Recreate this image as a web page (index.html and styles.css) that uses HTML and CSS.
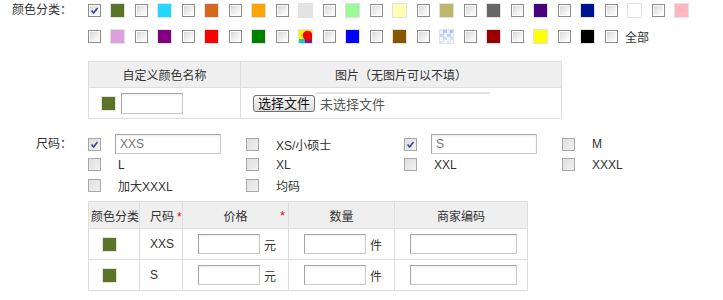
FILE: index.html
```html
<!DOCTYPE html>
<html lang="zh-CN">
<head>
    <meta charset="UTF-8">
    <title>颜色与尺码</title>
    <link rel="stylesheet" href="styles.css">
</head>
<body>
    <div class="sku-form">
        <div class="field">
            <div class="field-label">颜色分类：</div>
            <div class="field-body">
                <ul class="color-list">
                    <li class="color-item"><span class="cb checked"><svg viewBox="0 0 13 13"><path d="M3 6.5 5.5 9.5 10 3.5"/></svg></span><span class="swatch" style="background:#5b7428"></span></li>
                    <li class="color-item"><span class="cb"></span><span class="swatch" style="background:#22d8ff"></span></li>
                    <li class="color-item"><span class="cb"></span><span class="swatch" style="background:#d2691e"></span></li>
                    <li class="color-item"><span class="cb"></span><span class="swatch" style="background:#ffa500"></span></li>
                    <li class="color-item"><span class="cb"></span><span class="swatch" style="background:#e3e3e3"></span></li>
                    <li class="color-item"><span class="cb"></span><span class="swatch" style="background:#98fb98"></span></li>
                    <li class="color-item"><span class="cb"></span><span class="swatch" style="background:#ffffb3"></span></li>
                    <li class="color-item"><span class="cb"></span><span class="swatch" style="background:#bdb76b"></span></li>
                    <li class="color-item"><span class="cb"></span><span class="swatch" style="background:#666666"></span></li>
                    <li class="color-item"><span class="cb"></span><span class="swatch" style="background:#4b0082"></span></li>
                    <li class="color-item"><span class="cb"></span><span class="swatch" style="background:#001391"></span></li>
                    <li class="color-item"><span class="cb"></span><span class="swatch" style="background:#ffffff"></span></li>
                    <li class="color-item"><span class="cb"></span><span class="swatch" style="background:#ffb6c1"></span></li>

                    <li class="color-item"><span class="cb"></span><span class="swatch" style="background:#dda0dd"></span></li>
                    <li class="color-item"><span class="cb"></span><span class="swatch" style="background:#800080"></span></li>
                    <li class="color-item"><span class="cb"></span><span class="swatch" style="background:#ff0000"></span></li>
                    <li class="color-item"><span class="cb"></span><span class="swatch" style="background:#008000"></span></li>
                    <li class="color-item"><span class="cb"></span><span class="swatch swatch-mix"><svg viewBox="0 0 13 13"><rect width="13" height="13" fill="#ffee00"/><rect x="0" y="9" width="6" height="4" fill="#19c4c4"/><rect x="6" y="8" width="7" height="5" fill="#7b1a86"/><circle cx="8.5" cy="5.5" r="4.8" fill="#f00000"/></svg></span></li>
                    <li class="color-item"><span class="cb"></span><span class="swatch" style="background:#0000ff"></span></li>
                    <li class="color-item"><span class="cb"></span><span class="swatch" style="background:#875600"></span></li>
                    <li class="color-item"><span class="cb"></span><span class="swatch swatch-clear"></span></li>
                    <li class="color-item"><span class="cb"></span><span class="swatch" style="background:#990000"></span></li>
                    <li class="color-item"><span class="cb"></span><span class="swatch" style="background:#ffff00"></span></li>
                    <li class="color-item"><span class="cb"></span><span class="swatch" style="background:#000000"></span></li>
                    <li class="color-item color-all"><span class="cb"></span><span>全部</span></li>
                </ul>

                <table class="grid-table custom-colors">
                    <tr>
                        <th class="col-name">自定义颜色名称</th>
                        <th>图片（无图片可以不填）</th>
                    </tr>
                    <tr>
                        <td class="name-cell"><span class="swatch" style="background:#5b7428"></span><input type="text" class="text-input name-input"></td>
                        <td class="file-cell">
                            <span class="file-box"><button type="button" class="file-btn">选择文件</button><span class="file-status">未选择文件</span></span>
                        </td>
                    </tr>
                </table>
            </div>
        </div>

        <div class="field field-size">
            <div class="field-label">尺码：</div>
            <div class="field-body">
                <div class="size-grid">
                    <div class="size-item"><span class="cb light checked"><svg viewBox="0 0 13 13"><path d="M3 6.5 5.5 9.5 10 3.5"/></svg></span><input type="text" class="text-input size-input" value="XXS"></div>
                    <div class="size-item"><span class="cb light"></span><span class="size-name">XS/小硕士</span></div>
                    <div class="size-item"><span class="cb light checked"><svg viewBox="0 0 13 13"><path d="M3 6.5 5.5 9.5 10 3.5"/></svg></span><input type="text" class="text-input size-input" value="S"></div>
                    <div class="size-item"><span class="cb light"></span><span class="size-name">M</span></div>
                    <div class="size-item"><span class="cb light"></span><span class="size-name">L</span></div>
                    <div class="size-item"><span class="cb light"></span><span class="size-name">XL</span></div>
                    <div class="size-item"><span class="cb light"></span><span class="size-name">XXL</span></div>
                    <div class="size-item"><span class="cb light"></span><span class="size-name">XXXL</span></div>
                    <div class="size-item"><span class="cb light"></span><span class="size-name">加大XXXL</span></div>
                    <div class="size-item"><span class="cb light"></span><span class="size-name">均码</span></div>
                </div>

                <table class="grid-table sku-table">
                    <colgroup>
                        <col style="width:51px">
                        <col style="width:43px">
                        <col style="width:106px">
                        <col style="width:106px">
                        <col style="width:133px">
                    </colgroup>
                    <tr>
                        <th class="left">颜色分类</th>
                        <th class="left pad">尺码<span class="req">*</span></th>
                        <th class="price-head">价格<span class="req req-end">*</span></th>
                        <th>数量</th>
                        <th>商家编码</th>
                    </tr>
                    <tr>
                        <td class="swatch-cell"><span class="swatch" style="background:#5b7428"></span></td>
                        <td class="pad">XXS</td>
                        <td class="input-cell"><input type="text" class="text-input small-input"><span class="unit">元</span></td>
                        <td class="input-cell"><input type="text" class="text-input small-input"><span class="unit">件</span></td>
                        <td class="input-cell"><input type="text" class="text-input code-input"></td>
                    </tr>
                    <tr>
                        <td class="swatch-cell"><span class="swatch" style="background:#5b7428"></span></td>
                        <td class="pad">S</td>
                        <td class="input-cell"><input type="text" class="text-input small-input"><span class="unit">元</span></td>
                        <td class="input-cell"><input type="text" class="text-input small-input"><span class="unit">件</span></td>
                        <td class="input-cell"><input type="text" class="text-input code-input"></td>
                    </tr>
                </table>
            </div>
        </div>
    </div>
</body>
</html>
```

FILE: styles.css
```css
* {
    box-sizing: border-box;
}

body {
    margin: 0;
    padding-top: 3px;
    background-color: #fff;
    color: #333;
    font-family: "Liberation Sans", "Noto Sans CJK SC", sans-serif;
    font-size: 12px;
}

.field {
    display: flex;
}

.field-label {
    flex: none;
    width: 72px;
    margin-right: 16px;
    text-align: right;
    line-height: 15px;
}

/* checkbox look */
.cb {
    flex: none;
    display: inline-block;
    width: 13px;
    height: 13px;
    margin-right: 9px;
    border: 1px solid #8c8c8c;
    background: linear-gradient(135deg, #d4d4d4, #f4f4f4 65%, #fff);
    box-shadow: inset 0 0 0 1px #fbfbfb;
}

.cb.light {
    border-color: #a8a8a8;
    background: linear-gradient(135deg, #e0e0e0, #f0f0f0);
    box-shadow: none;
}

.cb svg {
    display: block;
    width: 11px;
    height: 11px;
}

.cb svg path {
    fill: none;
    stroke: #34468c;
    stroke-width: 1.9;
}

.swatch {
    flex: none;
    display: inline-block;
    width: 15px;
    height: 15px;
    border: 1px solid #e2e2e2;
}

.swatch svg {
    display: block;
    width: 13px;
    height: 13px;
}

.swatch-clear {
    background:
        linear-gradient(to bottom, rgba(255, 255, 255, 0), rgba(255, 255, 255, 0.65)),
        conic-gradient(#a9c3ee 25%, #e9eef8 0 50%, #a9c3ee 0 75%, #e9eef8 0) 0 0 / 7px 7px;
}

.color-list {
    display: flex;
    flex-wrap: wrap;
    row-gap: 11px;
    width: 611px;
    margin: 0;
    padding: 0;
    list-style: none;
}

.color-item {
    display: flex;
    align-items: center;
    width: 47px;
    height: 15px;
}

.color-all .cb {
    margin-right: 7px;
}

/* tables */
.grid-table {
    border-collapse: collapse;
    table-layout: fixed;
}

.grid-table th,
.grid-table td {
    border: 1px solid #dedede;
    padding: 0;
}

.grid-table th {
    background-color: #efefef;
    font-weight: normal;
    text-align: center;
}

.custom-colors {
    width: 474px;
    margin-top: 17px;
}

.custom-colors th {
    height: 26px;
}

.custom-colors td {
    height: 31px;
}

.custom-colors .col-name {
    width: 152px;
}

.name-cell .swatch {
    vertical-align: middle;
    margin-left: 12px;
    margin-right: 5px;
}

.text-input {
    vertical-align: middle;
    height: 21px;
    padding: 0 4px;
    border: 1px solid;
    border-color: #a6a6a6 #c9c9c9 #c9c9c9 #a6a6a6;
    box-shadow: inset 0 1px 2px rgba(0, 0, 0, 0.08);
    color: #777;
    font-family: inherit;
    font-size: 12px;
    outline: none;
}

.name-input {
    width: 62px;
}

.file-cell {
    padding-left: 12px !important;
}

.file-box {
    position: relative;
    display: inline-flex;
    align-items: center;
}

.file-box::after {
    content: "";
    position: absolute;
    left: 63px;
    top: -2px;
    width: 174px;
    height: 2px;
    background-color: #e2e2e2;
}

.file-btn {
    height: 17px;
    padding: 0 4px;
    border: 1px solid #707070;
    border-radius: 3px;
    background: linear-gradient(#f6f6f6, #dedede);
    color: #111;
    font-family: inherit;
    font-size: 13px;
    line-height: 15px;
}

.file-status {
    margin-left: 5px;
    color: #555;
    font-size: 13px;
}

/* size */
.field-size {
    margin-top: 15px;
}

.field-size .field-label {
    line-height: 20px;
}

.size-grid {
    display: grid;
    grid-template-columns: repeat(4, 158px);
    grid-template-rows: 20px 21px 21px;
}

.size-item {
    display: flex;
    align-items: center;
}

.size-item .cb {
    margin-right: 14px;
}

.size-name {
    padding-left: 3px;
}

.size-input {
    width: 106px;
    height: 20px;
}

.sku-table {
    width: 439px;
    margin-top: 5px;
}

.sku-table th {
    height: 27px;
}

.sku-table td {
    height: 31px;
}

.sku-table .left {
    text-align: left;
    padding-left: 2px;
}

.sku-table .pad {
    padding-left: 10px;
}

.price-head {
    position: relative;
}

.req {
    margin-left: 3px;
    color: #e00;
}

.req-end {
    position: absolute;
    right: 3px;
    top: 7px;
}

.swatch-cell {
    padding-left: 13px !important;
}

.swatch-cell .swatch {
    vertical-align: middle;
}

.input-cell {
    padding-left: 15px !important;
}

.small-input {
    width: 62px;
    height: 20px;
}

.unit {
    vertical-align: middle;
    margin-left: 4px;
}

.code-input {
    width: 107px;
    height: 20px;
}
```
